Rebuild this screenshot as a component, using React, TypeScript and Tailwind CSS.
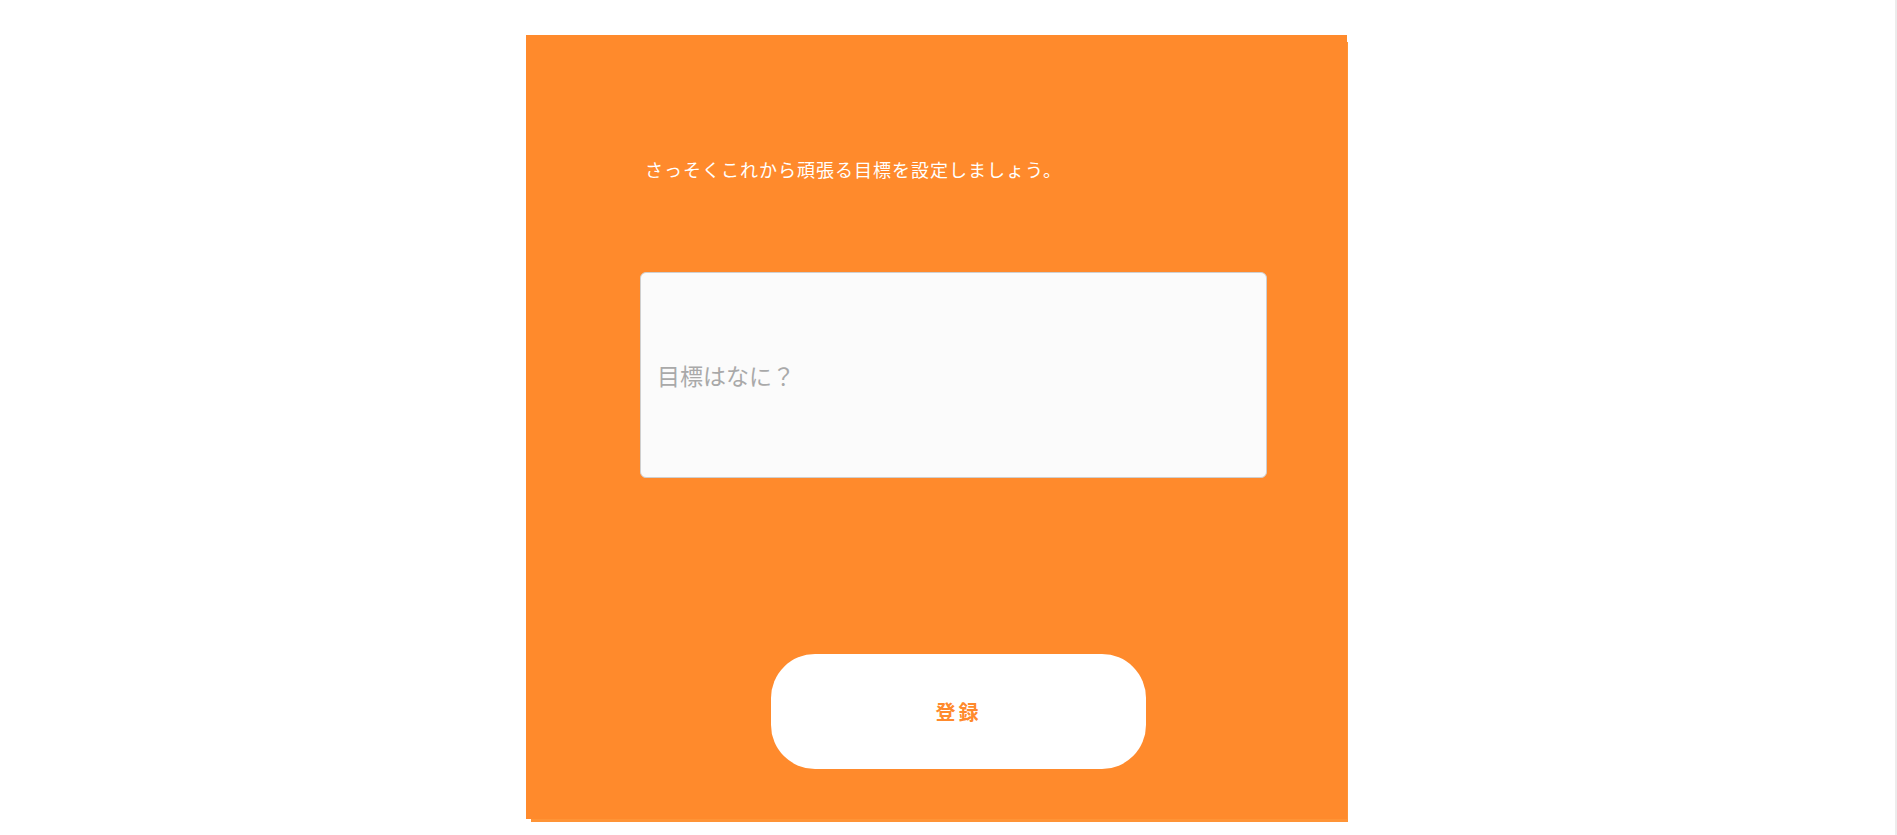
import React from "react";

export default function App() {
  const font = { fontFamily: '"Noto Sans CJK JP", "Noto Sans", sans-serif' };
  return (
    <div className="flex min-h-[835px] w-full bg-white" style={font}>
      <div className="flex-1">
        <div className="ml-[526px] mt-[35px] flex h-[784px] w-[821px] flex-col bg-[#ff8a2c] shadow-[3px_5px_0_-2px_#ff9436]">
          <p className="ml-[119px] mt-[121px] text-[18px] leading-[27px] tracking-[1px] text-white">
            さっそくこれから頑張る目標を設定しましょう。
          </p>
          <input
            type="text"
            placeholder="目標はなに？"
            className="ml-[114px] mt-[89px] h-[206px] w-[627px] rounded-[6px] border border-[#cfcfcf] bg-[#fbfbfb] px-[16px] text-[23px] text-[#555] outline-none placeholder:text-[#a9a9a9]"
          />
          <button className="ml-[245px] mt-[176px] flex h-[115px] w-[375px] items-center justify-center rounded-[44px] bg-white text-[20px] font-bold tracking-[3px] text-[#ff8a2c]">
            登録
          </button>
        </div>
      </div>
      <div className="w-[2px] bg-[#ececec]" />
    </div>
  );
}
